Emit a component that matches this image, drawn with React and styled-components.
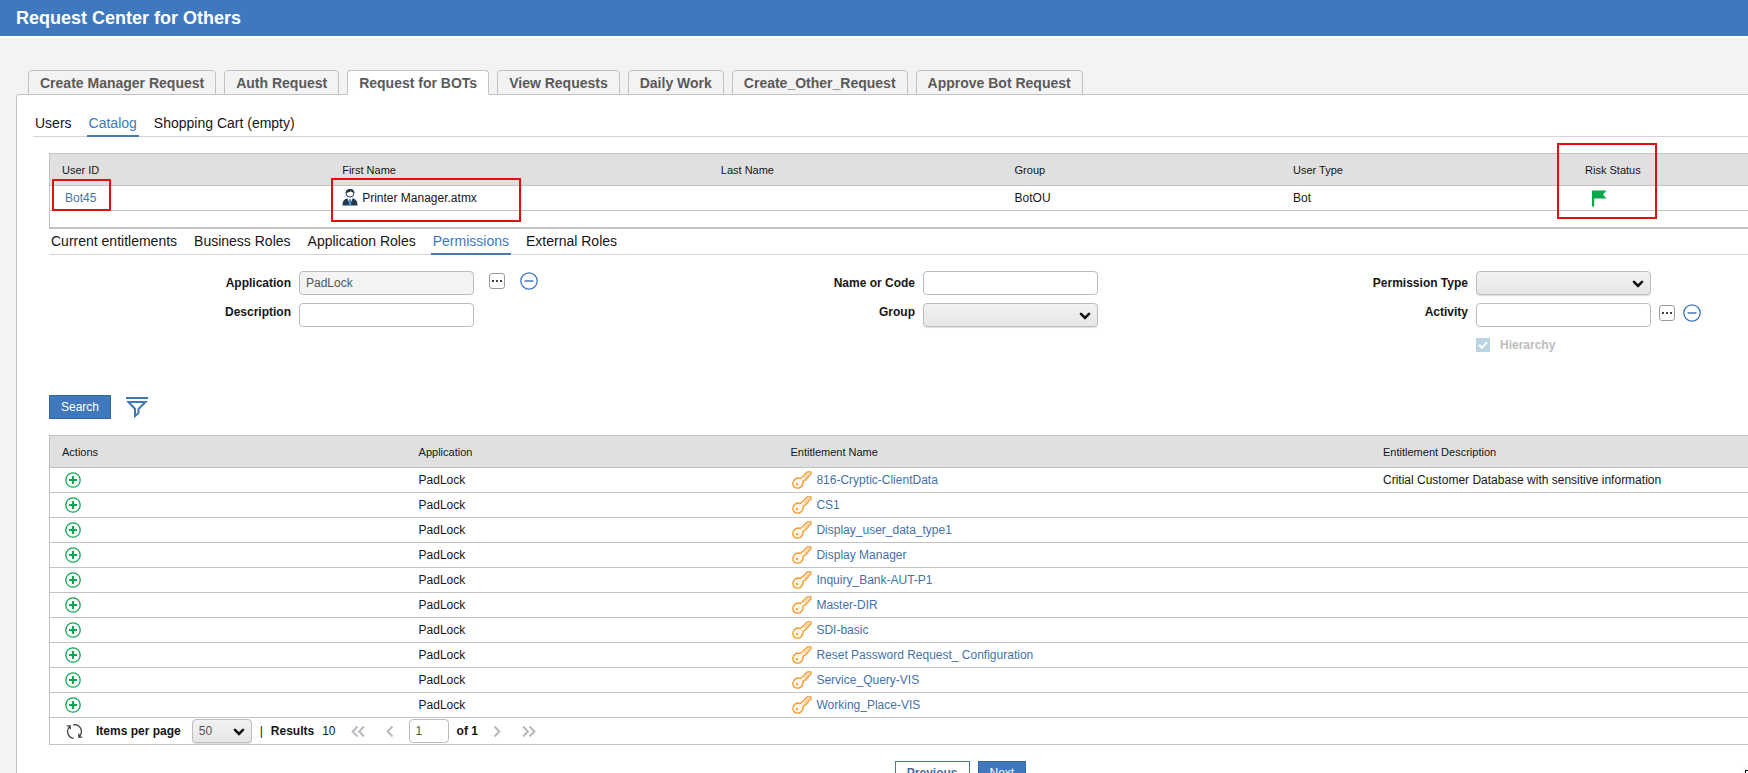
import React, { useState } from "react";
import styled, { createGlobalStyle, css } from 'styled-components';


const GlobalStyle = createGlobalStyle`
    * {
        box-sizing: border-box;
    }

    body {
        margin: 0;
        overflow-x: hidden;
        background-color: #f3f3f3;
        color: #161616;
        font-family: "Liberation Sans", Arial, sans-serif;
        font-size: 12px;
        line-height: 16px;
    }

    button, input, select {
        margin: 0;
        font: inherit;
    }

    svg {
        display: block;
        flex: none;
    }
`;

const Header = styled.header`
    display: flex;
    align-items: center;
    height: 38px;
    padding: 0 16px;
    border-bottom: 2px solid #fff;
    background-color: #4078be;
`;

const Title = styled.h1`
    margin: 0;
    color: #fff;
    font-size: 18px;
    line-height: 24px;
`;

const MainTabs = styled.nav`
    display: flex;
    gap: 8px;
    padding: 32px 0 0 28px;
`;

const MainTab = styled.button`
    height: 25px;
    margin-bottom: -1px;
    padding: 0 11px;
    border: 1px solid #c2c2c2;
    border-bottom-color: ${props => props.$active ? '#fff' : '#c2c2c2'};
    border-radius: 4px 4px 0 0;
    background-color: ${props => props.$active ? '#fff' : '#f3f3f3'};
    color: #5a5a5a;
    font-size: 14px;
    font-weight: bold;
    white-space: nowrap;
    cursor: pointer;
`;

const Panel = styled.main`
    min-height: calc(100vh - 94px);
    margin-left: 16px;
    padding: 0 0 24px 16px;
    border: 1px solid #c2c2c2;
    border-width: 1px 0 0 1px;
    border-top-left-radius: 4px;
    background-color: #fff;
`;

const SubTabs = styled.nav`
    display: flex;
    align-items: flex-end;
    gap: 13px;
    padding-top: ${props => props.$roomy ? '16px' : '0'};
    border-bottom: 1px solid #d4d4d4;
`;

const SubTab = styled.button`
    height: 26px;
    margin-bottom: -1px;
    padding: 0 2px;
    border: 0;
    border-bottom: 2px solid ${props => props.$active ? '#4a78b0' : 'transparent'};
    background: none;
    color: ${props => props.$active ? '#4078be' : '#161616'};
    font-size: 14px;
    cursor: pointer;
`;

const Content = styled.div`
    padding: 16px 0 0 16px;
`;

const Table = styled.table`
    width: 100%;
    border-left: 1px solid #c2c2c2;
    border-collapse: separate;
    border-spacing: 0;
    table-layout: fixed;
`;

const HeadCell = styled.th`
    position: relative;
    width: ${props => props.$width || 'auto'};
    height: 33px;
    padding: 0 0 0 12px;
    border-top: 1px solid #c2c2c2;
    border-bottom: 1px solid #c2c2c2;
    background-color: #e0e0e0;
    font-size: 11px;
    font-weight: normal;
    text-align: left;
`;

const Cell = styled.td`
    position: relative;
    height: 25px;
    padding: 0 0 0 12px;
    border-bottom: 1px solid #c2c2c2;
`;

const TableEnd = styled.div`
    height: 18px;
    border-bottom: 2px solid #c2c2c2;
    border-left: 1px solid #c2c2c2;
`;

const CellContent = styled.div`
    display: flex;
    align-items: center;
    gap: 4px;
    padding-left: ${props => props.$indent || '0'};
`;

const Link = styled.a`
    color: #4472a9;
    text-decoration: none;

    &:hover {
        text-decoration: underline;
    }
`;

/* Red outline drawn over the cells worth a look */
const Highlight = styled.span`
    position: absolute;
    z-index: 1;
    top: ${props => props.$top};
    left: ${props => props.$left};
    width: ${props => props.$width};
    height: ${props => props.$height};
    border: 2px solid #e01010;
    pointer-events: none;
`;

const IconButton = styled.button`
    display: flex;
    padding: 0;
    border: 0;
    background: none;
    cursor: pointer;
`;

const SearchForm = styled.form`
    display: grid;
    grid-template-columns: 250fr 400fr 224fr 400fr 153fr 272fr;
    grid-template-rows: 24px 24px 20px;
    row-gap: 8px;
    padding-top: 16px;
`;

const Label = styled.label`
    align-self: ${props => props.$top ? 'start' : 'center'};
    padding-right: 8px;
    font-weight: bold;
    line-height: 18px;
    text-align: right;
`;

const Control = styled.div`
    display: flex;
    align-items: center;
    gap: ${props => props.$spread ? '15px' : '8px'};

    ${IconButton} {
        padding-bottom: 4px;
    }
`;

const fieldStyle = css`
    height: 24px;
    border: 1px solid #bdbdbd;
    border-radius: 4px;
    color: #555;
`;

const TextInput = styled.input`
    ${fieldStyle}
    width: ${props => props.$width || '175px'};
    padding: 0 6px;
    background-color: ${props => props.readOnly ? '#f3f3f3' : '#fff'};
`;

const SelectBox = styled.div`
    position: relative;
    width: ${props => props.$width || '175px'};

    svg {
        position: absolute;
        top: 9px;
        right: 7px;
        pointer-events: none;
    }
`;

const Select = styled.select`
    ${fieldStyle}
    display: block;
    width: 100%;
    padding: 0 6px;
    appearance: none;
    background: linear-gradient(#f2f2f2, #e6e6e6);
    box-shadow: 0 1px 1px #ddd;
`;

const CheckRow = styled.label`
    grid-column: 6;
    display: flex;
    align-items: center;
    gap: 10px;
    color: #bdbdbd;
    font-weight: bold;
`;

const CheckBox = styled.span`
    position: relative;
    display: flex;

    input {
        width: 14px;
        height: 14px;
        appearance: none;
        background-color: #b9d5e4;
    }

    svg {
        position: absolute;
        top: 3px;
        left: 2px;
    }
`;

const Toolbar = styled.div`
    display: flex;
    align-items: center;
    gap: 15px;
    padding: 40px 0 16px;
`;

const Button = styled.button`
    height: 24px;
    padding: 0 11px;
    border: 1px solid ${props => props.$outline ? '#4078be' : '#2f66a8'};
    background-color: ${props => props.$outline ? '#fff' : '#4078be'};
    color: ${props => props.$outline ? '#4472a9' : '#fff'};
    font-weight: ${props => props.$outline ? 'bold' : 'normal'};
    cursor: pointer;
`;

const Pager = styled.div`
    display: flex;
    align-items: center;
    height: 27px;
    padding-left: 16px;
    border-bottom: 1px solid #c2c2c2;
    border-left: 1px solid #c2c2c2;
`;

const PageSize = styled.div`
    display: flex;
    align-items: center;
    gap: 11px;
    padding-left: 13px;
    font-weight: bold;

    select {
        font-weight: normal;
    }
`;

const Results = styled.div`
    display: flex;
    gap: 8px;
    padding: 0 15px 0 8px;
`;

const PageNav = styled.div`
    display: flex;
    align-items: center;
    gap: ${props => props.$wide ? '21px' : '8px'};
    padding-right: 15px;
`;

const Footer = styled.div`
    display: flex;
    justify-content: center;
    gap: 8px;
    padding: 16px 0 0 124px;
`;

const CornerButton = styled.button`
    position: fixed;
    right: -29px;
    bottom: -29px;
    width: 32px;
    height: 32px;
    border: 1px solid #000;
    background-color: #fff;
    box-shadow: 0 0 12px rgba(0, 0, 0, .08);
`;


const Chevron = () => (
    <svg width="12" height="8" viewBox="0 0 12 8">
        <path d="M2 1.8 L6 5.8 L10 1.8" fill="none" stroke="#111" strokeWidth="2.6" strokeLinecap="round" />
    </svg>
);

const PersonIcon = () => (
    <svg width="16" height="20" viewBox="0 0 16 20">
        <path d="M0.5 17.5 C0.5 12.5 2.5 11 6 10 L10 10 C13.5 11 15.5 12.5 15.5 17.5 Z" fill="#233a4c" />
        <path d="M5.2 10 L8 16.5 L10.8 10 Z" fill="#fff" />
        <path d="M7.2 11 L8.8 11 L9.4 17.5 L6.6 17.5 Z" fill="#4d8bc4" />
        <circle cx="8" cy="5.2" r="3.9" fill="#fff" stroke="#233a4c" strokeWidth="1" />
        <path d="M3.6 5 C3.2 0 12.8 -0.8 12.4 5 C10.5 4.6 9.6 4 9 3.2 C7.6 4.4 5.6 4.4 3.6 5 Z" fill="#233a4c" />
    </svg>
);

const FlagIcon = () => (
    <svg width="15" height="17" viewBox="0 0 15 17">
        <path d="M0 0.5 H14.5 L11 4.5 L14.5 8.5 H2.2 V16.5 H0 Z" fill="#09a84b" />
    </svg>
);

const DotsIcon = () => (
    <svg width="16" height="16" viewBox="0 0 16 16">
        <rect x="0.5" y="0.5" width="15" height="15" rx="2.5" fill="#fff" stroke="#9b9b9b" />
        <path d="M3 7 h2 v2 h-2 z M7 7 h2 v2 h-2 z M11 7 h2 v2 h-2 z" fill="#444" />
    </svg>
);

const MinusIcon = () => (
    <svg width="18" height="18" viewBox="0 0 18 18" fill="none" stroke="#4078be">
        <circle cx="9" cy="9" r="8.2" strokeWidth="1.3" />
        <path d="M4.5 9 H13.5" strokeWidth="1.5" />
    </svg>
);

const PlusIcon = () => (
    <svg width="16" height="16" viewBox="0 0 16 16" fill="none" stroke="#10a651">
        <circle cx="8" cy="8" r="7.2" strokeWidth="1.3" />
        <path d="M4 8 H12 M8 4 V12" strokeWidth="2" />
    </svg>
);

const FilterIcon = () => (
    <svg width="22" height="22" viewBox="0 0 22 22" fill="none" stroke="#4078b4">
        <path d="M0 2 H22" strokeWidth="2" />
        <path d="M2.5 6 H19.5 L12.5 13 V17 L9 20 V13 Z" strokeWidth="2" />
    </svg>
);

const KeyIcon = () => (
    <svg width="20" height="18" viewBox="0 0 20 18">
        <path
            d="M15.2 0.9 L8.6 7.4 C6.2 6.6 3.6 7.2 2 9.2 C0.4 11.3 0.4 14.4 2.2 16 C4 17.7 7.4 17.6 9.2 15.8 C10.8 14.2 11.4 12.2 10.9 10.5 L12.6 9.2 L14 8.8 L14.2 7.4 L15.8 6.8 L16.2 5.4 L19 3 V0.9 Z"
            fill="#fff6e4"
            stroke="#f0982d"
            strokeWidth="1.3"
            strokeLinejoin="round"
        />
        <path d="M12 6.6 L16.8 2.4" stroke="#f8cf9c" strokeWidth="1.6" />
        <circle cx="5" cy="13.2" r="1.1" fill="#f0982d" />
    </svg>
);

const RefreshIcon = () => (
    <svg width="17" height="17" viewBox="0 0 17 17" fill="none" stroke="#444" strokeWidth="1.3">
        <path d="M4 3.2 A7 7 0 0 0 7.6 15.4 M0.8 2.8 H4.2 V6.2" />
        <path d="M13 13.8 A7 7 0 0 0 9.4 1.6 M7 1.8 L9.6 1.6 M16.2 14.2 H12.8 V10.8" />
    </svg>
);

const ArrowIcon = ({ double, right }) => (
    <svg width={double ? 14 : 8} height="13" viewBox={double ? '0 0 14 13' : '0 0 8 13'} fill="none" stroke="#b4b8bc" strokeWidth="1.8">
        {right
            ? <path d={double ? 'M1 1.5 L6 6.5 L1 11.5 M7.5 1.5 L12.5 6.5 L7.5 11.5' : 'M1.5 1.5 L6.5 6.5 L1.5 11.5'} />
            : <path d={double ? 'M6.5 1.5 L1.5 6.5 L6.5 11.5 M13 1.5 L8 6.5 L13 11.5' : 'M6.5 1.5 L1.5 6.5 L6.5 11.5'} />
        }
    </svg>
);


const mainTabs = [
    'Create Manager Request',
    'Auth Request',
    'Request for BOTs',
    'View Requests',
    'Daily Work',
    'Create_Other_Request',
    'Approve Bot Request',
];

const stepTabs = ['Users', 'Catalog', 'Shopping Cart (empty)'];

const roleTabs = ['Current entitlements', 'Business Roles', 'Application Roles', 'Permissions', 'External Roles'];

const entitlements = [
    { name: '816-Cryptic-ClientData', description: 'Critial Customer Database with sensitive information' },
    { name: 'CS1' },
    { name: 'Display_user_data_type1' },
    { name: 'Display Manager' },
    { name: 'Inquiry_Bank-AUT-P1' },
    { name: 'Master-DIR' },
    { name: 'SDI-basic' },
    { name: 'Reset Password Request_ Configuration' },
    { name: 'Service_Query-VIS' },
    { name: 'Working_Place-VIS' },
];


function TabList(props) {
    const Tab = props.tab;

    return props.items.map(i =>
        <Tab key={i} type="button" $active={props.selected === i} onClick={() => props.onSelect(i)}>
            {i}
        </Tab>
    );
}

function UserTable() {
    return (
        <>
            <Table>
                <thead>
                    <tr>
                        <HeadCell $width="16.5%">User ID</HeadCell>
                        <HeadCell $width="22.3%">First Name</HeadCell>
                        <HeadCell $width="17.3%">Last Name</HeadCell>
                        <HeadCell $width="16.4%">Group</HeadCell>
                        <HeadCell $width="17.2%">User Type</HeadCell>
                        <HeadCell>
                            Risk Status
                            <Highlight $top="-11px" $left="-16px" $width="100px" $height="76px" />
                        </HeadCell>
                    </tr>
                </thead>
                <tbody>
                    <tr>
                        <Cell>
                            <CellContent $indent="3px"><Link href="#bot45">Bot45</Link></CellContent>
                            <Highlight $top="-7px" $left="2px" $width="59px" $height="32px" />
                        </Cell>
                        <Cell>
                            <CellContent><PersonIcon />Printer Manager.atmx</CellContent>
                            <Highlight $top="-8px" $left="1px" $width="190px" $height="44px" />
                        </Cell>
                        <Cell />
                        <Cell>BotOU</Cell>
                        <Cell>Bot</Cell>
                        <Cell><CellContent $indent="7px"><FlagIcon /></CellContent></Cell>
                    </tr>
                </tbody>
            </Table>
            <TableEnd />
        </>
    );
}

function PermissionSearch() {
    return (
        <>
            <SearchForm id="permission-search" onSubmit={e => e.preventDefault()}>
                <Label htmlFor="application">Application</Label>
                <Control $spread>
                    <TextInput id="application" value="PadLock" readOnly />
                    <IconButton type="button" aria-label="Browse applications"><DotsIcon /></IconButton>
                    <IconButton type="button" aria-label="Clear application"><MinusIcon /></IconButton>
                </Control>

                <Label htmlFor="name-code">Name or Code</Label>
                <Control><TextInput id="name-code" /></Control>

                <Label htmlFor="permission-type">Permission Type</Label>
                <Control>
                    <SelectBox>
                        <Select id="permission-type"><option></option></Select>
                        <Chevron />
                    </SelectBox>
                </Control>

                <Label $top htmlFor="description">Description</Label>
                <Control><TextInput id="description" /></Control>

                <Label $top htmlFor="group">Group</Label>
                <Control>
                    <SelectBox>
                        <Select id="group"><option></option></Select>
                        <Chevron />
                    </SelectBox>
                </Control>

                <Label $top htmlFor="activity">Activity</Label>
                <Control>
                    <TextInput id="activity" />
                    <IconButton type="button" aria-label="Browse activities"><DotsIcon /></IconButton>
                    <IconButton type="button" aria-label="Clear activity"><MinusIcon /></IconButton>
                </Control>

                <CheckRow>
                    <CheckBox>
                        <input type="checkbox" defaultChecked disabled />
                        <svg width="10" height="8" viewBox="0 0 10 8">
                            <path d="M1 4 L4 6.8 L9 1.2" fill="none" stroke="#fff" strokeWidth="2" />
                        </svg>
                    </CheckBox>
                    Hierarchy
                </CheckRow>
            </SearchForm>

            <Toolbar>
                <Button type="submit" form="permission-search">Search</Button>
                <IconButton type="button" aria-label="Filter"><FilterIcon /></IconButton>
            </Toolbar>
        </>
    );
}

function EntitlementTable() {
    return (
        <Table>
            <thead>
                <tr>
                    <HeadCell $width="21%">Actions</HeadCell>
                    <HeadCell $width="21.9%">Application</HeadCell>
                    <HeadCell $width="34.9%">Entitlement Name</HeadCell>
                    <HeadCell>Entitlement Description</HeadCell>
                </tr>
            </thead>
            <tbody>
                {entitlements.map(i =>
                    <tr key={i.name}>
                        <Cell>
                            <CellContent $indent="3px">
                                <IconButton type="button" aria-label={'Add ' + i.name}><PlusIcon /></IconButton>
                            </CellContent>
                        </Cell>
                        <Cell>PadLock</Cell>
                        <Cell>
                            <CellContent $indent="2px">
                                <KeyIcon />
                                <Link href={'#' + i.name}>{i.name}</Link>
                            </CellContent>
                        </Cell>
                        <Cell>{i.description}</Cell>
                    </tr>
                )}
            </tbody>
        </Table>
    );
}

function ResultPager() {
    return (
        <Pager>
            <IconButton type="button" aria-label="Refresh"><RefreshIcon /></IconButton>
            <PageSize>
                <label htmlFor="page-size">Items per page</label>
                <SelectBox $width="60px">
                    <Select id="page-size" defaultValue="50"><option>50</option></Select>
                    <Chevron />
                </SelectBox>
            </PageSize>
            <Results>
                <span>|</span>
                <strong>Results</strong>
                <span>10</span>
            </Results>
            <PageNav $wide>
                <IconButton type="button" aria-label="First page"><ArrowIcon double /></IconButton>
                <IconButton type="button" aria-label="Previous page"><ArrowIcon /></IconButton>
            </PageNav>
            <PageNav>
                <TextInput aria-label="Page" $width="40px" defaultValue="1" />
                <strong>of 1</strong>
            </PageNav>
            <PageNav $wide>
                <IconButton type="button" aria-label="Next page"><ArrowIcon right /></IconButton>
                <IconButton type="button" aria-label="Last page"><ArrowIcon double right /></IconButton>
            </PageNav>
        </Pager>
    );
}


export default function App() {
    const [mainTab, setMainTab] = useState('Request for BOTs');
    const [stepTab, setStepTab] = useState('Catalog');
    const [roleTab, setRoleTab] = useState('Permissions');

    return (
        <>
            <GlobalStyle />
            <Header><Title>Request Center for Others</Title></Header>
            <MainTabs>
                <TabList tab={MainTab} items={mainTabs} selected={mainTab} onSelect={setMainTab} />
            </MainTabs>
            <Panel>
                <SubTabs $roomy>
                    <TabList tab={SubTab} items={stepTabs} selected={stepTab} onSelect={setStepTab} />
                </SubTabs>
                <Content>
                    <UserTable />
                    <SubTabs>
                        <TabList tab={SubTab} items={roleTabs} selected={roleTab} onSelect={setRoleTab} />
                    </SubTabs>
                    <PermissionSearch />
                    <EntitlementTable />
                    <ResultPager />
                    <Footer>
                        <Button type="button" $outline>Previous</Button>
                        <Button type="button">Next</Button>
                    </Footer>
                </Content>
            </Panel>
            <CornerButton type="button" aria-label="Help" />
        </>
    );
}
